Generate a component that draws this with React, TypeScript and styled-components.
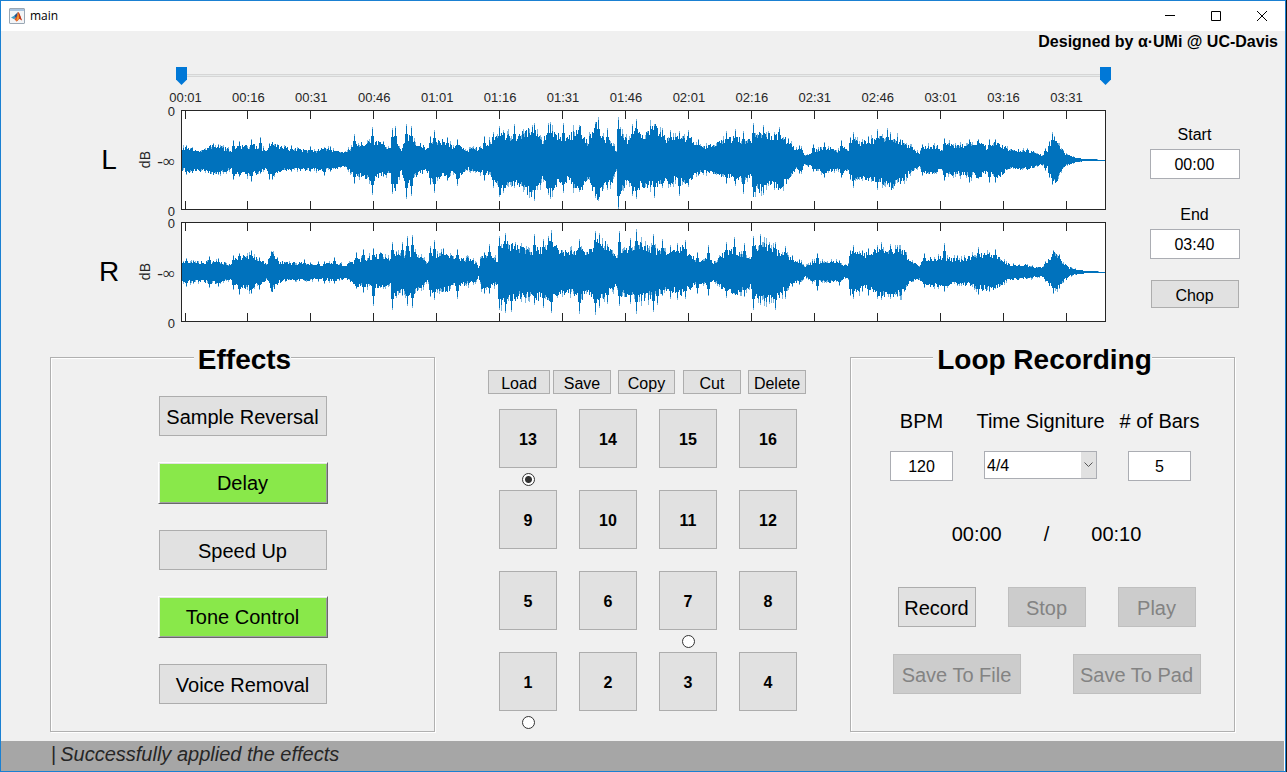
import React, { useState } from "react";
import styled, { createGlobalStyle, css } from "styled-components";

const GlobalStyle = createGlobalStyle`
  *, *::before, *::after { box-sizing: border-box; }
  body {
    margin: 0;
    background: #f0f0f0;
    color: #000;
    font-family: "Liberation Sans", Arial, sans-serif;
    font-size: 16px;
    line-height: 20px;
  }
  button, input, select { font: inherit; color: inherit; margin: 0; }
`;

/* ---------- window frame ---------- */

const Desktop = styled.div`
  display: flex;
  min-height: 100vh;
  padding-right: 1px;
  background: #14161c;
`;

const Window = styled.div`
  display: flex;
  flex: 1;
  flex-direction: column;
  min-width: 0;
  border: 1px solid #1a80d2;
  background: #f0f0f0;
`;

const TitleBar = styled.header`
  display: flex;
  align-items: center;
  height: 30px;
  padding-left: 8px;
  background: #fff;
`;

const WindowTitle = styled.h1`
  flex: 1;
  margin: 0 0 0 5px;
  font: 400 12px/16px "Open Sans", "Noto Sans", sans-serif;
`;

const CaptionButton = styled.button`
  display: grid;
  place-items: center;
  width: 46px;
  height: 30px;
  padding: 0;
  border: 0;
  background: none;
`;

const Content = styled.main`
  display: flex;
  flex: 1;
  flex-direction: column;
`;

const Credit = styled.p`
  margin: 0;
  padding: 1px 7px 0 0;
  font-weight: 700;
  text-align: right;
`;

const StatusBar = styled.footer`
  display: flex;
  align-items: center;
  gap: 4px;
  height: 30px;
  padding: 0 50px 4px;
  border-right: 1px solid #fff;
  background: #a6a6a6;
  color: #262626;
  font-size: 20px;
  font-style: italic;
`;

const Caret = styled.span`
  font-style: normal;
`;

/* ---------- controls ---------- */

const Button = styled.button<{ $size?: "small" | "large"; $width: number }>`
  flex: none;
  width: ${(p) => p.$width}px;
  height: ${(p) => (p.$size === "large" ? 40 : 28)}px;
  padding: ${(p) => (p.$size === "large" ? 2 : 3)}px 0 0;
  border: 1px solid #adadad;
  background: #e1e1e1;
  font-size: ${(p) => (p.$size === "large" ? 20 : 16)}px;
  white-space: nowrap;

  &:disabled {
    border-color: #bfbfbf;
    background: #cccccc;
    color: #838383;
  }
`;

const EffectButton = styled(Button)<{ $active: boolean }>`
  ${(p) =>
    p.$active &&
    css`
      width: 170px;
      height: 42px;
      margin: -1px;
      padding: 0;
      border-color: #fff #696969 #696969 #fff;
      background: #89e84a;
      box-shadow: inset 1px 1px #e3e3e3, inset -1px -1px #a0a0a0;
    `}
`;

const TextBox = styled.input<{ $width: number }>`
  width: ${(p) => p.$width}px;
  height: 30px;
  padding: 2px 0 0;
  border: 1px solid #abadb3;
  background: #fff;
  text-align: center;
`;

/* ---------- wave form view ---------- */

const Scope = styled.section`
  display: grid;
  grid-template-columns: 180px minmax(0, 1fr) 179px;
  margin-top: 15px;
`;

const ScopeColumn = styled.div`
  grid-column: 2;
`;

const RangeSlider = styled.div`
  position: relative;
  height: 18px;
  margin: 0 -5px;
`;

const RangeTrack = styled.div`
  height: 3px;
  border: 1px solid #d6d6d6;
  background: #e7eaea;
`;

const TrackRow = styled.div`
  padding: 7px 5px 0;
`;

const RangeInput = styled.input`
  position: absolute;
  inset: 0;
  width: 100%;
  height: 18px;
  appearance: none;
  background: none;
  pointer-events: none;

  &::-webkit-slider-thumb {
    appearance: none;
    width: 11px;
    height: 18px;
    border: 0;
    border-radius: 0;
    background: #0078d7;
    clip-path: polygon(0 0, 100% 0, 100% 70%, 50% 100%, 0 70%);
    pointer-events: auto;
  }
`;

const TimeScale = styled.div`
  display: grid;
  grid-template-columns: repeat(15, minmax(0, 1fr));
  margin: 5px 8px 4px -27px;
  color: #262626;
  font-size: 13px;
  line-height: 16px;
  text-align: center;
`;

const Channel = styled.div`
  display: flex;
  align-items: center;
  justify-content: flex-end;
  height: 100px;
  margin: 0 0 12px -180px;

  &:last-child { margin-bottom: 0; }
`;

const ChannelName = styled.span`
  width: 32px;
  font-size: 28px;
  line-height: 32px;
  text-align: center;
`;

const AxisTitle = styled.span`
  margin-left: 12px;
  color: #262626;
  font-size: 14px;
  line-height: 16px;
  transform: rotate(180deg);
  writing-mode: vertical-rl;
`;

const AxisScale = styled.div`
  display: flex;
  flex-direction: column;
  align-self: stretch;
  justify-content: space-between;
  width: 22px;
  margin: -4px 6px -8px 0;
  color: #262626;
  font-size: 13px;
  line-height: 12px;
  text-align: right;
`;

const AxisInfinity = styled.span`
  font-family: "Liberation Serif", serif;
  font-size: 17px;
`;

const Gutter = styled.div`
  display: flex;
  flex: none;
  align-items: center;
  justify-content: flex-end;
  align-self: stretch;
  width: 180px;
`;

const Plot = styled.svg`
  flex: 1;
  min-width: 0;
  height: 100px;
  border: 1px solid #262626;
  background: #fff;
`;

const TrimControls = styled.div`
  display: flex;
  grid-column: 3;
  flex-direction: column;
  align-items: center;
  gap: 26px;
  padding: 58px 2px 0 0;
`;

const TrimField = styled.label`
  display: flex;
  flex-direction: column;
  align-items: center;
  gap: 4px;
`;

const ChopSlot = styled.div`
  margin-top: -5px;
`;

/* ---------- lower half ---------- */

const Workbench = styled.section`
  display: grid;
  grid-template-columns: 386fr 414fr 386fr;
  margin: 20px 49px 8px;
`;

const Panel = styled.fieldset`
  min-width: 0;
  margin: 0 1px 1px 0;
  padding: 24px 0 27px;
  border: 1px solid #b0b0b0;
  box-shadow: 1px 1px #fff, inset 1px 1px #fff;
`;

const PanelTitle = styled.legend`
  margin: 0 auto;
  padding: 6px 0 0 4px;
  background: #f0f0f0;
  font-size: 28px;
  font-weight: 700;
  line-height: 24px;
`;

const EffectList = styled.div`
  display: flex;
  flex-direction: column;
  align-items: center;
  gap: 27px;
`;

const Sampler = styled.div`
  display: flex;
  flex-direction: column;
  align-items: center;
  padding: 28px 0 0 8px;
`;

const PadToolbar = styled.div`
  display: grid;
  grid-template-columns: repeat(5, 58px);
  gap: 7px;
  margin-bottom: 15px;
`;

const ToolButton = styled(Button)`
  height: 24px;
`;

const PadGrid = styled.div`
  display: grid;
  grid-template-columns: repeat(4, 58px);
  grid-auto-rows: 81px;
  column-gap: 22px;
  margin: 0 0 -8px 2px;
`;

const PadCell = styled.div`
  display: flex;
  flex-direction: column;
  align-items: center;
  gap: 5px;
`;

const Pad = styled.button`
  width: 58px;
  height: 59px;
  padding: 2px 0 0;
  border: 1px solid #adadad;
  background: #e1e1e1;
  font-weight: 700;
`;

const PadRadio = styled.input`
  flex: none;
  width: 13px;
  height: 13px;
  appearance: none;
  border: 1px solid #333;
  border-radius: 50%;
  background: #fff;

  &:checked {
    background: radial-gradient(circle, #333 3px, #fff 4px);
  }
`;

const LoopFields = styled.div`
  display: grid;
  grid-template-columns: repeat(3, 119px);
  justify-content: center;
  padding: 13px 4px 0 0;
`;

const LoopField = styled.label`
  display: flex;
  flex-direction: column;
  align-items: center;
  gap: 18px;
  white-space: nowrap;
`;

const LoopLabel = styled.span`
  font-size: 20px;
  line-height: 24px;
`;

const SelectBox = styled.span`
  position: relative;
  display: block;
  width: 113px;
  height: 28px;
`;

const Select = styled.select`
  width: 100%;
  height: 100%;
  padding: 2px 18px 0 2px;
  appearance: none;
  border: 1px solid #abadb3;
  border-radius: 0;
  background: #fff;
`;

const SelectArrow = styled.span`
  position: absolute;
  top: 1px;
  right: 1px;
  display: grid;
  place-items: center;
  width: 15px;
  height: 26px;
  background: #e1e1e1;
  pointer-events: none;
`;

const LoopRow = styled.div<{ $gap: number; $top: number }>`
  display: flex;
  justify-content: center;
  gap: ${(p) => p.$gap}px;
  margin-top: ${(p) => p.$top}px;
  padding-left: 8px;
`;

const Clock = styled.span`
  font-size: 20px;
  line-height: 24px;
`;

/* ---------- audio data: [time, level above, level below] ---------- */

type Level = [number, number, number];

const leftBody: Level[] = [
  [0, 10, 9], [8, 10, 11], [15, 8, 9], [25, 10, 10], [30, 13, 13], [38, 12, 12], [48, 8, 8], [52, 12, 13],
  [58, 12, 12], [68, 13, 13], [78, 12, 11], [84, 7, 8], [90, 14, 14], [98, 12, 10], [110, 10, 8], [120, 9, 9],
  [130, 8, 9], [145, 10, 9], [155, 8, 8], [163, 6, 6], [170, 12, 12], [178, 14, 15], [190, 17, 18], [200, 14, 13],
  [208, 10, 12], [213, 18, 25], [219, 10, 10], [224, 22, 22], [232, 17, 14], [245, 10, 10], [250, 16, 18],
  [262, 17, 13], [265, 17, 18], [270, 11, 11], [277, 15, 17], [283, 8, 8], [295, 11, 10], [305, 15, 12],
  [313, 20, 18], [318, 24, 28], [330, 20, 22], [340, 24, 26], [350, 28, 30], [360, 17, 18], [368, 26, 27],
  [375, 22, 22], [385, 20, 18], [398, 28, 30], [405, 16, 15], [415, 32, 38], [422, 20, 20], [430, 14, 20],
  [434, 8, 8], [437, 24, 30], [445, 18, 18], [454, 30, 30], [460, 22, 22], [472, 30, 25], [485, 18, 20],
  [495, 20, 18], [507, 21, 20], [515, 12, 12], [525, 12, 11], [540, 18, 14], [555, 20, 18], [562, 18, 16],
  [570, 16, 15], [571, 26, 30], [582, 22, 24], [599, 22, 24], [609, 13, 14], [614, 9, 8], [619, 11, 11],
  [622, 4, 4], [630, 7, 7], [640, 11, 12], [650, 11, 10], [655, 7, 7], [660, 14, 14], [666, 9, 8], [671, 18, 20],
  [677, 15, 15], [690, 18, 18], [700, 20, 20], [710, 20, 24], [720, 17, 18], [730, 10, 10], [737, 6, 6],
  [742, 12, 12], [755, 12, 11], [759, 8, 8], [763, 16, 14], [775, 12, 12], [785, 14, 14], [797, 16, 14],
  [805, 11, 11], [810, 15, 15], [818, 14, 14], [825, 10, 8], [835, 9, 8], [845, 9, 8], [855, 6, 6], [863, 3, 3],
  [868, 12, 12], [873, 20, 20], [878, 12, 12], [883, 5, 5], [890, 3, 3], [900, 1, 1], [925, 0, 0],
];

const leftPeaks: Level[] = [
  [5, 15, 15], [11, 13, 13], [32, 17, 14], [37, 16, 15], [52, 20, 20], [58, 19, 17], [70, 21, 22], [79, 23, 14],
  [88, 17, 20], [91, 18, 20], [96, 16, 12], [110, 15, 12], [129, 14, 12], [143, 13, 16], [149, 14, 12],
  [173, 26, 24], [191, 33, 35], [202, 19, 17], [211, 32, 34], [214, 34, 30], [225, 36, 39], [230, 34, 36],
  [249, 24, 25], [253, 30, 33], [266, 23, 21], [276, 21, 26], [303, 24, 21], [312, 28, 28], [318, 34, 37],
  [322, 30, 33], [333, 36, 28], [351, 35, 32], [353, 37, 41], [367, 37, 35], [369, 38, 39], [382, 37, 33],
  [398, 35, 32], [414, 38, 38], [417, 43, 41], [426, 32, 30], [437, 43, 50], [439, 33, 34], [451, 36, 36],
  [455, 41, 39], [466, 29, 24], [473, 36, 38], [481, 32, 28], [489, 30, 27], [498, 29, 36], [507, 30, 27],
  [517, 21, 16], [545, 29, 24], [554, 31, 26], [562, 29, 34], [572, 37, 37], [582, 35, 35], [587, 29, 26],
  [593, 28, 30], [598, 33, 24], [607, 22, 20], [618, 15, 14], [632, 16, 12], [643, 18, 18], [660, 20, 18],
  [669, 23, 20], [672, 28, 28], [687, 24, 20], [696, 31, 30], [706, 32, 25], [709, 28, 23], [719, 21, 20],
  [741, 16, 16], [763, 22, 21], [788, 21, 23], [797, 21, 19], [808, 21, 23], [814, 21, 23], [846, 12, 9],
  [864, 12, 11], [868, 19, 18], [871, 28, 25], [873, 24, 20],
];

const rightBody: Level[] = [
  [0, 9, 9], [20, 9, 9], [38, 9, 10], [48, 6, 6], [52, 13, 13], [68, 14, 15], [80, 11, 11], [84, 7, 7],
  [90, 16, 16], [97, 9, 9], [110, 8, 7], [125, 8, 8], [135, 6, 6], [150, 9, 8], [163, 6, 6], [175, 11, 12],
  [190, 14, 14], [200, 15, 13], [208, 11, 12], [213, 16, 22], [219, 14, 15], [230, 18, 22], [245, 9, 9],
  [250, 16, 18], [265, 16, 16], [272, 12, 12], [285, 12, 11], [293, 9, 9], [296, 4, 4], [299, 14, 14],
  [310, 14, 12], [316, 10, 10], [319, 26, 28], [328, 24, 26], [335, 22, 22], [350, 18, 22], [362, 22, 24],
  [370, 26, 26], [378, 18, 18], [390, 18, 18], [398, 22, 26], [404, 16, 16], [414, 28, 26], [425, 24, 20],
  [433, 14, 14], [437, 18, 20], [450, 22, 20], [458, 26, 24], [470, 20, 22], [485, 16, 16], [500, 22, 20],
  [508, 16, 14], [515, 10, 10], [525, 12, 12], [533, 8, 8], [540, 16, 16], [552, 20, 20], [560, 16, 16],
  [568, 14, 13], [573, 22, 22], [585, 24, 24], [597, 18, 22], [604, 16, 14], [612, 9, 9], [619, 10, 9],
  [622, 4, 4], [630, 9, 8], [650, 10, 9], [665, 5, 5], [670, 18, 18], [685, 16, 14], [696, 20, 20],
  [710, 20, 22], [722, 18, 18], [727, 10, 9], [737, 6, 6], [743, 12, 12], [763, 13, 12], [778, 11, 10],
  [795, 15, 14], [808, 16, 16], [818, 12, 12], [825, 7, 7], [840, 6, 6], [862, 4, 4], [866, 11, 11],
  [873, 18, 16], [880, 9, 9], [887, 4, 4], [895, 2, 2], [903, 1, 1], [925, 0, 0],
];

const rightPeaks: Level[] = [
  [5, 14, 15], [12, 12, 12], [28, 16, 16], [37, 14, 15], [52, 17, 18], [58, 19, 23], [70, 22, 22], [78, 15, 18],
  [90, 21, 20], [96, 15, 13], [123, 13, 9], [137, 11, 10], [143, 11, 12], [153, 15, 12], [175, 20, 17],
  [182, 23, 21], [192, 24, 34], [199, 20, 16], [211, 30, 38], [215, 21, 26], [221, 30, 24], [226, 36, 34],
  [231, 37, 36], [249, 26, 25], [253, 32, 28], [262, 24, 20], [276, 23, 27], [303, 20, 22], [308, 28, 22],
  [318, 36, 38], [324, 39, 41], [330, 28, 40], [334, 30, 28], [353, 38, 33], [362, 33, 36], [367, 36, 28],
  [370, 42, 41], [376, 24, 26], [398, 33, 42], [414, 41, 43], [418, 39, 36], [426, 28, 32], [438, 41, 34],
  [449, 34, 32], [455, 43, 42], [472, 38, 40], [476, 24, 33], [481, 33, 24], [489, 27, 27], [496, 29, 28],
  [504, 32, 27], [516, 20, 22], [527, 27, 24], [545, 30, 26], [553, 35, 22], [563, 29, 25], [572, 36, 38],
  [579, 38, 33], [588, 30, 32], [594, 30, 38], [604, 26, 27], [611, 17, 15], [618, 13, 13], [636, 19, 19],
  [658, 12, 14], [669, 22, 24], [672, 27, 27], [681, 22, 20], [687, 24, 24], [696, 27, 27], [700, 30, 28],
  [709, 28, 27], [716, 27, 25], [723, 22, 20], [743, 19, 16], [763, 29, 20], [776, 17, 14], [797, 25, 23],
  [808, 20, 20], [814, 23, 17], [832, 9, 8], [844, 8, 6], [864, 11, 10], [872, 22, 22], [878, 18, 17],
];

const PLOT_WIDTH = 923;
const MIDDLE = 49;
const PEAK_SHARES = [0.94, 0.72];

function noise(seed: number) {
  let state = seed;
  return () => {
    state = (state * 1664525 + 1013904223) % 4294967296;
    return state / 4294967296;
  };
}

function levelAt(body: Level[], x: number): [number, number] {
  let i = 0;
  while (i < body.length - 2 && body[i + 1][0] <= x) i++;
  const [x0, u0, d0] = body[i];
  const [x1, u1, d1] = body[i + 1];
  const t = (x - x0) / (x1 - x0);
  return [u0 + (u1 - u0) * t, d0 + (d1 - d0) * t];
}

function buildWave(body: Level[], peaks: Level[], seed: number) {
  const random = noise(seed);
  let solid = "";
  let faint = "";
  for (let x = 0; x < PLOT_WIDTH; x++) {
    const [up, down] = levelAt(body, x);
    let top = up * (0.86 + random() * 0.4);
    let bottom = down * (0.86 + random() * 0.4);
    let peaked = false;
    for (const [at, peakUp, peakDown] of peaks) {
      const distance = Math.abs(at - 1 - x);
      if (distance > 1) continue;
      peaked = true;
      top = Math.max(top, peakUp * PEAK_SHARES[distance]);
      bottom = Math.max(bottom, peakDown * PEAK_SHARES[distance]);
      if (distance === 0) {
        faint += `M${x + 0.5} ${MIDDLE - peakUp}V${MIDDLE + peakDown}`;
      }
    }
    if (!peaked && random() > 0.7) {
      faint += `M${x + 0.5} ${Math.round(MIDDLE - top * 1.18)}V${Math.round(MIDDLE + bottom * 1.18)}`;
    }
    solid += `M${x + 0.5} ${Math.round(MIDDLE - top)}V${Math.max(Math.round(MIDDLE + bottom), MIDDLE + 1)}`;
  }
  return { solid, faint };
}

const waves = {
  L: buildWave(leftBody, leftPeaks, 7),
  R: buildWave(rightBody, rightPeaks, 23),
};

const times = [
  "00:01", "00:16", "00:31", "00:46", "01:01", "01:16", "01:31", "01:46",
  "02:01", "02:16", "02:31", "02:46", "03:01", "03:16", "03:31",
];

const ticks = times.map((_, i) => Math.floor(3 + i * 62.93) + 0.5);

function WaveChannel({ name }: { name: "L" | "R" }) {
  const wave = waves[name];
  return (
    <Channel>
      <Gutter>
        <ChannelName>{name}</ChannelName>
        <AxisTitle>dB</AxisTitle>
        <AxisScale>
          <span>0</span>
          <AxisInfinity>-∞</AxisInfinity>
          <span>0</span>
        </AxisScale>
      </Gutter>
      <Plot viewBox="0 0 923 98" preserveAspectRatio="none" role="img" aria-label={`Channel ${name}`}>
        <path d={wave.faint} stroke="#0072bd" strokeOpacity="0.5" />
        <path d={wave.solid} stroke="#0072bd" />
        <path d={ticks.map((x) => `M${x} 0V8M${x} 90V98`).join("")} stroke="#262626" />
      </Plot>
    </Channel>
  );
}

function MatlabIcon() {
  return (
    <svg width="16" height="16" viewBox="0 0 16 16" aria-hidden="true">
      <rect x="0.5" y="0.5" width="15" height="15" rx="0.5" fill="#f3f5f7" stroke="#9aa7b4" />
      <rect x="1" y="1" width="14" height="2" fill="#a9c4e0" />
      <path d="M2 9.4 5.2 7.8 7 9.2 5.2 11.2z" fill="#3f9bc4" />
      <path d="M5.2 7.8 9 4 8.2 8.6 7 10.2z" fill="#23548c" />
      <path d="M9 4C8.4 7.2 7.4 9.8 5.2 11.2 6.4 11.2 7 13.6 7.6 13.6 8.8 13.2 9.6 11 10.6 11 11.4 11 12 11.8 13 12.4 11.6 9 10.4 4 9 4z" fill="#d5481f" />
      <path d="M9 4C8.8 7 8 10 7 13 8.6 12.6 9.4 10.8 10 10.6 9.8 8 9.6 5.4 9 4z" fill="#f59a2e" />
      <path d="M9.2 4.4C10 6 10.4 8.6 10.8 11 11.6 11 12 11.8 13 12.4 11.6 9 10.6 5 9.2 4.4z" fill="#b8341c" />
    </svg>
  );
}

const tools = [
  { name: "Load", width: 62 },
  { name: "Save", width: 58 },
  { name: "Copy", width: 57 },
  { name: "Cut", width: 58 },
  { name: "Delete", width: 58 },
];

const pads = [13, 14, 15, 16, 9, 10, 11, 12, 5, 6, 7, 8, 1, 2, 3, 4];
const loadedPads = [13, 7, 1];
const effects = ["Sample Reversal", "Delay", "Speed Up", "Tone Control", "Voice Removal"];

export default function App() {
  const [active, setActive] = useState(["Delay", "Tone Control"]);
  const [selectedPad, setSelectedPad] = useState(13);

  const toggle = (name: string) =>
    setActive((list) => (list.includes(name) ? list.filter((n) => n !== name) : [...list, name]));

  return (
    <Desktop>
      <GlobalStyle />
      <Window>
        <TitleBar>
          <MatlabIcon />
          <WindowTitle>main</WindowTitle>
          <CaptionButton aria-label="Minimize">
            <svg width="10" height="10"><path d="M0 4.5H10" stroke="#000" /></svg>
          </CaptionButton>
          <CaptionButton aria-label="Maximize">
            <svg width="10" height="10"><path d="M.5 .5H9.5V9.5H.5z" fill="none" stroke="#000" /></svg>
          </CaptionButton>
          <CaptionButton aria-label="Close">
            <svg width="10" height="10"><path d="M0 0 10 10M10 0 0 10" stroke="#000" /></svg>
          </CaptionButton>
        </TitleBar>

        <Content>
          <Credit>Designed by α·UMi @ UC-Davis</Credit>

          <Scope>
            <ScopeColumn>
              <RangeSlider>
                <TrackRow><RangeTrack /></TrackRow>
                <RangeInput type="range" min={0} max={220} defaultValue={0} aria-label="Selection start" />
                <RangeInput type="range" min={0} max={220} defaultValue={220} aria-label="Selection end" />
              </RangeSlider>
              <TimeScale>
                {times.map((t) => <span key={t}>{t}</span>)}
              </TimeScale>
              <WaveChannel name="L" />
              <WaveChannel name="R" />
            </ScopeColumn>
            <TrimControls>
              <TrimField>
                Start
                <TextBox $width={90} defaultValue="00:00" />
              </TrimField>
              <TrimField>
                End
                <TextBox $width={90} defaultValue="03:40" />
              </TrimField>
              <ChopSlot><Button $width={88}>Chop</Button></ChopSlot>
            </TrimControls>
          </Scope>

          <Workbench>
            <Panel>
              <PanelTitle>Effects</PanelTitle>
              <EffectList>
                {effects.map((name) => (
                  <EffectButton
                    key={name}
                    $size="large"
                    $width={168}
                    $active={active.includes(name)}
                    aria-pressed={active.includes(name)}
                    onClick={() => toggle(name)}
                  >
                    {name}
                  </EffectButton>
                ))}
              </EffectList>
            </Panel>

            <Sampler>
              <PadToolbar>
                {tools.map((t) => <ToolButton key={t.name} $width={t.width}>{t.name}</ToolButton>)}
              </PadToolbar>
              <PadGrid>
                {pads.map((n) => (
                  <PadCell key={n}>
                    <Pad>{n}</Pad>
                    {loadedPads.includes(n) && (
                      <PadRadio
                        type="radio"
                        name="pad"
                        aria-label={`Pad ${n}`}
                        checked={selectedPad === n}
                        onChange={() => setSelectedPad(n)}
                      />
                    )}
                  </PadCell>
                ))}
              </PadGrid>
            </Sampler>

            <Panel>
              <PanelTitle>Loop Recording</PanelTitle>
              <LoopFields>
                <LoopField>
                  <LoopLabel>BPM</LoopLabel>
                  <TextBox $width={63} defaultValue="120" />
                </LoopField>
                <LoopField>
                  <LoopLabel>Time Signiture</LoopLabel>
                  <SelectBox>
                    <Select defaultValue="4/4">
                      <option>4/4</option>
                      <option>3/4</option>
                    </Select>
                    <SelectArrow>
                      <svg width="9" height="6"><path d="M.5 .5 4.5 4.5 8.5 .5" fill="none" stroke="#555" /></svg>
                    </SelectArrow>
                  </SelectBox>
                </LoopField>
                <LoopField>
                  <LoopLabel># of Bars</LoopLabel>
                  <TextBox $width={63} defaultValue="5" />
                </LoopField>
              </LoopFields>
              <LoopRow $gap={42} $top={41}>
                <Clock>00:00</Clock>
                <Clock>/</Clock>
                <Clock>00:10</Clock>
              </LoopRow>
              <LoopRow $gap={32} $top={41}>
                <Button $size="large" $width={78}>Record</Button>
                <Button $size="large" $width={78} disabled>Stop</Button>
                <Button $size="large" $width={78} disabled>Play</Button>
              </LoopRow>
              <LoopRow $gap={52} $top={27}>
                <Button $size="large" $width={128} disabled>Save To File</Button>
                <Button $size="large" $width={128} disabled>Save To Pad</Button>
              </LoopRow>
            </Panel>
          </Workbench>
        </Content>

        <StatusBar>
          <Caret>|</Caret>
          <span>Successfully applied the effects</span>
        </StatusBar>
      </Window>
    </Desktop>
  );
}
